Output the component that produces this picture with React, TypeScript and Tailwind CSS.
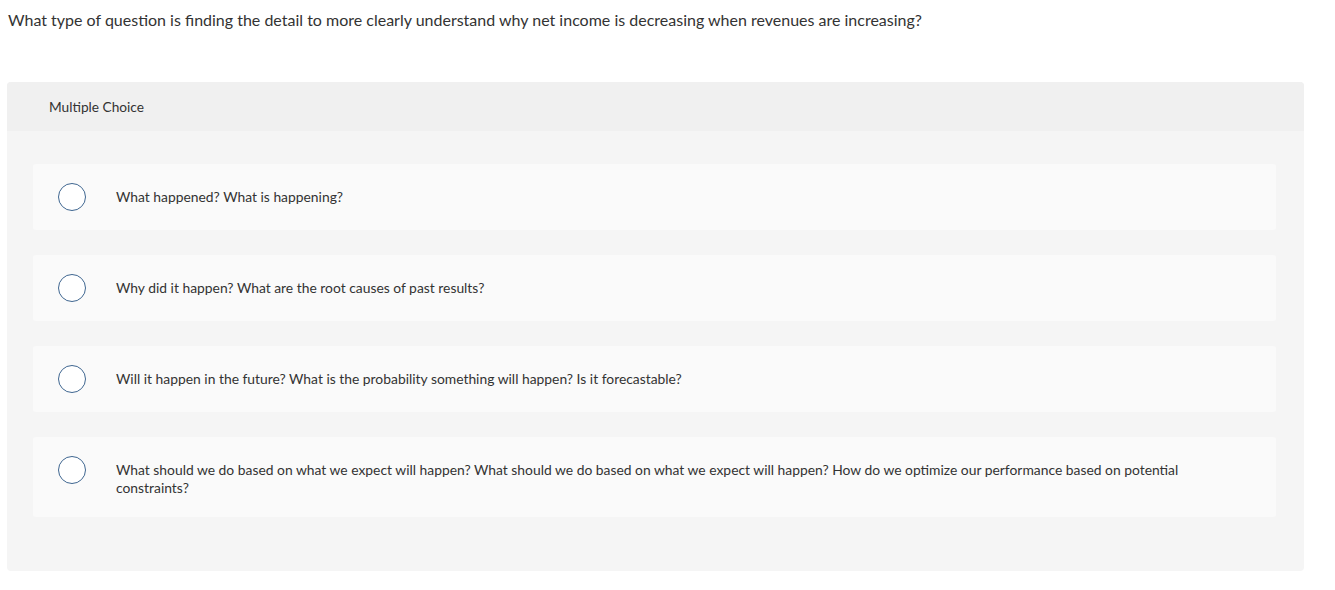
import React from "react"

const options = [
  "What happened? What is happening?",
  "Why did it happen? What are the root causes of past results?",
  "Will it happen in the future? What is the probability something will happen? Is it forecastable?",
  "What should we do based on what we expect will happen? What should we do based on what we expect will happen? How do we optimize our performance based on potential constraints?",
]

export default function App() {
  return (
    <div className="min-h-[590px] bg-white text-[#333] font-['Lato','Liberation_Sans',sans-serif]">
      <p className="pl-2 pt-[10px] text-[16px] leading-[19px]">
        What type of question is finding the detail to more clearly understand why net income is decreasing when revenues are increasing?
      </p>
      <div className="mx-[7px] mt-[53px] w-[1297px] rounded-sm bg-[#f5f5f5]">
        <div className="flex h-[49px] items-center rounded-t-sm bg-[#f0f0f0] pl-[42px] pt-[2px] text-[13.7px]">
          Multiple Choice
        </div>
        <div className="flex flex-col gap-[25px] pb-[54px] pl-[26px] pr-[28px] pt-[33px]">
          {options.map((text, i) => (
            <div
              key={i}
              className="flex items-start rounded-[3px] bg-[#fafafa] pb-[19px] pl-[25px] pr-[60px] pt-[19px]"
            >
              <span className="h-[28px] w-[28px] shrink-0 rounded-full border-[1.5px] border-[#3f6690] bg-white" />
              <span className="mb-[1px] ml-[30px] mt-[5px] text-[13.86px] leading-[18px]">{text}</span>
            </div>
          ))}
        </div>
      </div>
    </div>
  )
}
